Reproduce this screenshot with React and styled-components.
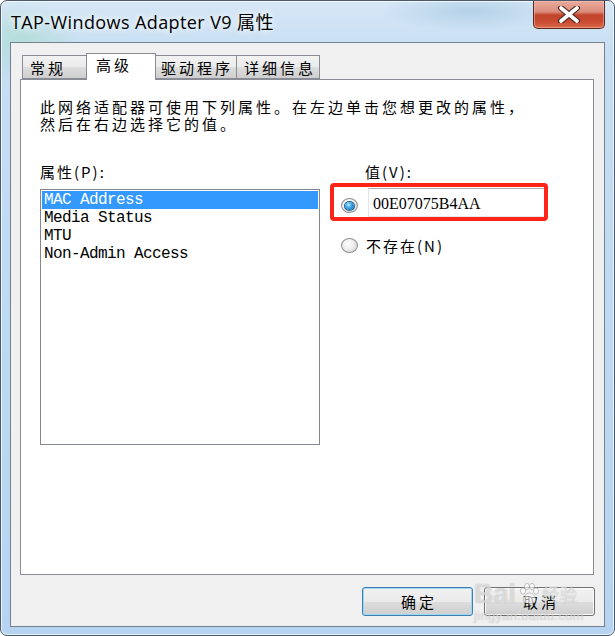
import React from 'react'
import styled, { createGlobalStyle } from 'styled-components'

const CJK = `"Noto Sans CJK SC", "Noto Sans", sans-serif`
const MONO = `"Liberation Mono", "Noto Sans CJK SC", monospace`

const GlobalStyle = createGlobalStyle`
  html, body {
    margin: 0;
    padding: 0;
    background: #ffffff;
  }
  body {
    width: 615px;
    height: 636px;
    overflow: hidden;
  }
`

const Window = styled.div`
  position: relative;
  box-sizing: border-box;
  width: 615px;
  height: 636px;
  display: flex;
  flex-direction: column;
  border: 1px solid #4b5b6d;
  border-radius: 7px;
  background:
    radial-gradient(ellipse 60px 40px at 20px 40px, rgba(170, 220, 205, 0.7), transparent),
    radial-gradient(ellipse 90px 20px at 470px 10px, rgba(150, 190, 220, 0.5), transparent),
    linear-gradient(180deg, #d6e7f6 0%, #c7def3 8%, #bcd8f2 60%, #b6d4f1 100%);
  box-shadow: inset 0 0 0 1px rgba(255, 255, 255, 0.7);
  font-family: ${CJK};
  color: #000;
`

const TitleBar = styled.div`
  height: 41px;
  display: flex;
  align-items: flex-start;
  justify-content: space-between;
  padding-left: 10px;
`

const Title = styled.div`
  padding-top: 10px;
  font-family: "Open Sans", "Noto Sans CJK SC", sans-serif;
  font-size: 18px;
  line-height: 22px;
  letter-spacing: 0.4px;
  text-shadow: 0 0 6px rgba(255, 255, 255, 0.95), 0 0 10px rgba(255, 255, 255, 0.8);
`

const CloseButton = styled.div`
  width: 72px;
  height: 28px;
  margin-right: 9px;
  box-sizing: border-box;
  display: flex;
  align-items: center;
  justify-content: center;
  border: 1px solid #5a2a20;
  border-top: none;
  border-radius: 0 0 5px 5px;
  background: linear-gradient(180deg, #e9aa9c 0%, #dc8d7c 40%, #c2442c 52%, #c84a31 75%, #da6a48 100%);
  box-shadow: inset 0 0 0 1px rgba(255, 200, 190, 0.45);
`

const Client = styled.div`
  flex: 1;
  margin: 0 9px 8px 9px;
  display: flex;
  flex-direction: column;
  border: 1px solid #74828f;
  background: #f0f0f0;
`

const TabStrip = styled.div`
  position: relative;
  z-index: 1;
  display: flex;
  align-items: flex-end;
  height: 27px;
  margin: 10px 0 -1px 11px;
`

const Tab = styled.div`
  box-sizing: border-box;
  width: ${p => p.$w}px;
  height: ${p => (p.$active ? 27 : 24)}px;
  margin: ${p => (p.$active ? '0 -2px' : '0 0 1px 0')};
  padding-top: ${p => (p.$active ? 1 : 2)}px;
  padding-left: ${p => (p.$active ? 9 : 7)}px;
  position: relative;
  z-index: ${p => (p.$active ? 2 : 1)};
  border: 1px solid #898c95;
  border-bottom: ${p => (p.$active ? 'none' : '1px solid #898c95')};
  border-left-width: ${p => (p.$first || p.$active ? 1 : 0)}px;
  background: ${p => (p.$active ? '#ffffff' : 'linear-gradient(180deg, #f2f2f2 0%, #ebebeb 50%, #dddddd 51%, #cfcfcf 100%)')};
  font-size: 15px;
  line-height: 20px;
  letter-spacing: 3px;
  white-space: nowrap;
`

const Panel = styled.div`
  height: 496px;
  box-sizing: border-box;
  margin: 0 10px 0 9px;
  padding: 18px 0 0 19px;
  border: 1px solid #898c95;
  background: #ffffff;
`

const Description = styled.p`
  margin: 0;
  font-size: 15px;
  line-height: 17px;
  letter-spacing: 3px;
`

const Columns = styled.div`
  display: flex;
  gap: 21px;
  margin-top: 31px;
`

const Column = styled.div`
  position: relative;
  display: flex;
  flex-direction: column;
  width: ${p => p.$w}px;
`

const Label = styled.div`
  font-size: 15px;
  line-height: 17px;
  letter-spacing: 2px;
  padding-left: ${p => p.$indent || 0}px;
`

const ListBox = styled.div`
  box-sizing: border-box;
  height: 256px;
  margin-top: 9px;
  padding: 1px;
  border: 1px solid #828790;
  background: #ffffff;
`

const ListItem = styled.div`
  height: 18px;
  padding-left: 2px;
  font-family: ${MONO};
  font-size: 16px;
  line-height: 18px;
  letter-spacing: -0.6px;
  white-space: nowrap;
  color: ${p => (p.$selected ? '#ffffff' : '#000000')};
  background: ${p => (p.$selected ? '#3399ff' : 'transparent')};
`

const RadioRow = styled.div`
  display: flex;
  align-items: ${p => p.$align || 'center'};
  margin-top: ${p => p.$top}px;
`

const Radio = styled.span`
  box-sizing: border-box;
  flex: none;
  width: 17px;
  height: 15px;
  margin-top: ${p => p.$offset || 0}px;
  display: flex;
  align-items: center;
  justify-content: center;
  border-radius: 50%;
  border: 1px solid #8e8f8f;
  background: radial-gradient(circle at 40% 35%, #ffffff 0%, #eeeeee 45%, #cfcfcf 100%);

  &::after {
    content: '';
    display: ${p => (p.$checked ? 'block' : 'none')};
    width: 9px;
    height: 8px;
    border-radius: 50%;
    background: radial-gradient(circle at 40% 35%, #b8ecff 0%, #3fa6e6 40%, #0c5a9c 100%);
    box-shadow: 0 0 0 1px #1b5f8f;
  }
`

const ValueInput = styled.div`
  box-sizing: border-box;
  width: 177px;
  height: 29px;
  margin-left: 10px;
  padding: 6px 0 0 4px;
  border: 1px solid #abadb3;
  border-left-color: #e2e3ea;
  border-bottom-color: #e3e9ef;
  background: #ffffff;
  font-family: "Liberation Serif", serif;
  font-size: 16px;
  line-height: 18px;
`

const RadioText = styled.span`
  margin-left: 8px;
  font-size: 15px;
  line-height: 17px;
  letter-spacing: 2px;
`

const Highlight = styled.div`
  position: absolute;
  left: -11px;
  top: 20px;
  width: 218px;
  height: 38px;
  box-sizing: border-box;
  border: 4px solid #fe2418;
  border-radius: 4px;
  pointer-events: none;
`

const ButtonRow = styled.div`
  display: flex;
  justify-content: flex-end;
  gap: 11px;
  margin: 12px 9px 0 0;
`

const Button = styled.div`
  box-sizing: border-box;
  width: 111px;
  height: 29px;
  display: flex;
  align-items: center;
  justify-content: center;
  border: 1px solid ${p => (p.$default ? '#3c7fb1' : '#707070')};
  border-radius: 3px;
  background: linear-gradient(180deg, #f2f2f2 0%, #ebebeb 50%, #dddddd 51%, #cfcfcf 100%);
  box-shadow: inset 0 0 0 1px ${p => (p.$default ? '#9cd9f2' : '#fcfcfc')};
  font-size: 15px;
  letter-spacing: 3px;
  padding-left: 3px;
`

const Watermark = styled.div`
  position: absolute;
  left: 473px;
  top: 578px;
  display: flex;
  flex-direction: column;
  align-items: flex-start;
  pointer-events: none;
  color: rgba(255, 255, 255, 0.55);
  text-shadow: 0 0 1px rgba(120, 120, 120, 0.55);
`

const WatermarkTop = styled.div`
  display: flex;
  align-items: center;
  font-family: "Liberation Sans", sans-serif;
  font-weight: bold;
  font-size: 27px;
  line-height: 30px;
`

const WatermarkCn = styled.span`
  font-family: ${CJK};
  font-weight: normal;
  font-size: 17px;
  letter-spacing: 1px;
`

const WatermarkUrl = styled.div`
  font-family: "Liberation Sans", sans-serif;
  font-size: 13px;
  line-height: 14px;
  letter-spacing: 0.3px;
`

function CloseGlyph () {
  return (
    <svg width='24' height='17' viewBox='0 0 24 17'>
      <path d='M4 2 L20 15 M20 2 L4 15' stroke='#4a2a24' strokeWidth='6' strokeLinecap='round' />
      <path d='M4 2 L20 15 M20 2 L4 15' stroke='#ffffff' strokeWidth='3.6' strokeLinecap='round' />
    </svg>
  )
}

function Paw () {
  return (
    <svg width='24' height='24' viewBox='0 0 24 24' style={{ margin: '0 1px' }}>
      <g fill='rgba(255,255,255,0.6)' stroke='rgba(120,120,120,0.5)' strokeWidth='0.8'>
        <ellipse cx='6' cy='9' rx='2.5' ry='3.2' />
        <ellipse cx='10' cy='4.5' rx='2.5' ry='3.2' />
        <ellipse cx='15' cy='4.5' rx='2.5' ry='3.2' />
        <ellipse cx='19' cy='9' rx='2.5' ry='3.2' />
        <path d='M12.5 11 C8 11 5 17 7 20 C9 22 16 22 18 20 C20 17 17 11 12.5 11 Z' />
      </g>
    </svg>
  )
}

const tabs = [
  { label: '常规', w: 66 },
  { label: '高级', w: 70, active: true },
  { label: '驱动程序', w: 83 },
  { label: '详细信息', w: 83 }
]

const properties = ['MAC Address', 'Media Status', 'MTU', 'Non-Admin Access']

export default function App () {
  return (
    <>
      <GlobalStyle />
      <Window>
        <TitleBar>
          <Title>TAP-Windows Adapter V9 属性</Title>
          <CloseButton><CloseGlyph /></CloseButton>
        </TitleBar>
        <Client>
          <TabStrip>
            {tabs.map((t, i) => (
              <Tab key={t.label} $w={t.w} $active={t.active} $first={i === 0}>{t.label}</Tab>
            ))}
          </TabStrip>
          <Panel>
            <Description>
              此网络适配器可使用下列属性。在左边单击您想更改的属性，<br />
              然后在右边选择它的值。
            </Description>
            <Columns>
              <Column $w={280}>
                <Label>属性(P):</Label>
                <ListBox>
                  {properties.map((p, i) => (
                    <ListItem key={p} $selected={i === 0}>{p}</ListItem>
                  ))}
                </ListBox>
              </Column>
              <Column $w={210}>
                <Label $indent={24}>值(V):</Label>
                <RadioRow $top={8} $align='flex-start'>
                  <Radio $checked $offset={10} />
                  <ValueInput>00E07075B4AA</ValueInput>
                </RadioRow>
                <RadioRow $top={20}>
                  <Radio />
                  <RadioText>不存在(N)</RadioText>
                </RadioRow>
                <Highlight />
              </Column>
            </Columns>
          </Panel>
          <ButtonRow>
            <Button $default>确定</Button>
            <Button>取消</Button>
          </ButtonRow>
        </Client>
        <Watermark>
          <WatermarkTop>
            Bai<Paw /><WatermarkCn>经验</WatermarkCn>
          </WatermarkTop>
          <WatermarkUrl>jingyan.baidu.com</WatermarkUrl>
        </Watermark>
      </Window>
    </>
  )
}
